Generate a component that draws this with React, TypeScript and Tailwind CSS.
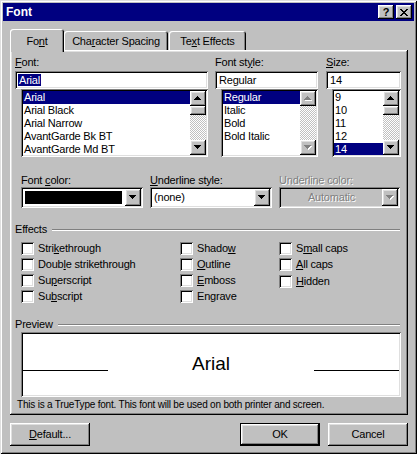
import React from "react";

const RAISED =
  "shadow-[inset_-1px_-1px_#000000,inset_1px_1px_#ffffff,inset_-2px_-2px_#808080,inset_2px_2px_#dfdfdf]";
const SUNKEN =
  "shadow-[inset_1px_1px_#808080,inset_-1px_-1px_#ffffff,inset_2px_2px_#000000,inset_-2px_-2px_#dfdfdf]";

function Mn({ text, i }: { text: string; i: number }) {
  if (i < 0) return <>{text}</>;
  return (
    <>
      {text.slice(0, i)}
      <span className="underline decoration-1 underline-offset-[1px]">{text[i]}</span>
      {text.slice(i + 1)}
    </>
  );
}

function Arrow({ dir, disabled }: { dir: "up" | "down"; disabled?: boolean }) {
  const up = "M3 0h1v1H3zM2 1h3v1H2zM1 2h5v1H1zM0 3h7v1H0z";
  const down = "M0 0h7v1H0zM1 1h5v1H1zM2 2h3v1H2zM3 3h1v1H3z";
  const d = dir === "up" ? up : down;
  return (
    <svg width="8" height="5" viewBox="0 0 8 5" shapeRendering="crispEdges">
      {disabled && <path d={d} fill="#ffffff" transform="translate(1,1)" />}
      <path d={d} fill={disabled ? "#808080" : "#000000"} />
    </svg>
  );
}

function ScrollBar({ thumb, disabled }: { thumb?: boolean; disabled?: boolean }) {
  return (
    <div className="flex w-[16px] flex-col">
      <div className={`flex h-[15px] items-center justify-center bg-[#c0c0c0] ${RAISED}`}>
        <Arrow dir="up" disabled={disabled} />
      </div>
      {thumb && <div className={`h-[9px] bg-[#c0c0c0] ${RAISED}`} />}
      <div className="flex-1 bg-[repeating-conic-gradient(#c0c0c0_0%_25%,#ffffff_0%_50%)] bg-[length:2px_2px]" />
      <div className={`flex h-[15px] items-center justify-center bg-[#c0c0c0] ${RAISED}`}>
        <Arrow dir="down" disabled={disabled} />
      </div>
    </div>
  );
}

function ListBox({
  items,
  selected,
  className,
  thumb,
  disabled,
}: {
  items: string[];
  selected: string;
  className: string;
  thumb?: boolean;
  disabled?: boolean;
}) {
  return (
    <div className={`flex h-[68px] bg-white p-[2px] ${SUNKEN} ${className}`}>
      <div className="flex-1 overflow-hidden">
        {items.map((it) => (
          <div
            key={it}
            className={`h-[13px] whitespace-nowrap pl-[1px] leading-[13px] ${
              it === selected ? "bg-[#000080] text-white" : "text-black"
            }`}
          >
            {it}
          </div>
        ))}
      </div>
      <ScrollBar thumb={thumb} disabled={disabled} />
    </div>
  );
}

function TextField({ children }: { children: React.ReactNode }) {
  return (
    <div className={`h-[18px] bg-white pl-[3px] pt-[3px] leading-[13px] whitespace-nowrap ${SUNKEN}`}>
      {children}
    </div>
  );
}

function Label({ children }: { children: React.ReactNode }) {
  return <div className="h-[15px] leading-[13px] whitespace-nowrap text-black">{children}</div>;
}

function Combo({
  children,
  disabled,
  className,
}: {
  children: React.ReactNode;
  disabled?: boolean;
  className: string;
}) {
  return (
    <div className={`flex h-[21px] p-[2px] ${SUNKEN} ${disabled ? "bg-[#c0c0c0]" : "bg-white"} ${className}`}>
      <div className="flex flex-1">{children}</div>
      <div className={`flex w-[16px] items-center justify-center bg-[#c0c0c0] ${RAISED}`}>
        <Arrow dir="down" disabled={disabled} />
      </div>
    </div>
  );
}

function Check({ text, i }: { text: string; i: number }) {
  return (
    <div className="flex h-[16px] items-center gap-[4px] whitespace-nowrap">
      <div className={`h-[13px] w-[13px] bg-white ${SUNKEN}`} />
      <span className="leading-[13px]">
        <Mn text={text} i={i} />
      </span>
    </div>
  );
}

function GroupTitle({ title }: { title: string }) {
  return (
    <div className="flex h-[13px] w-[385px] items-center">
      <span className="leading-[13px]">{title}</span>
      <div className="ml-[5px] h-[2px] flex-1 border-t border-b border-t-[#808080] border-b-white" />
    </div>
  );
}

function PushButton({
  children,
  isDefault,
  className,
}: {
  children: React.ReactNode;
  isDefault?: boolean;
  className?: string;
}) {
  if (isDefault) {
    return (
      <div className={`h-[23px] w-[80px] border border-black ${className ?? ""}`}>
        <div className={`flex h-full w-full items-center justify-center bg-[#c0c0c0] ${RAISED}`}>
          {children}
        </div>
      </div>
    );
  }
  return (
    <div
      className={`flex h-[23px] w-[80px] items-center justify-center bg-[#c0c0c0] ${RAISED} ${className ?? ""}`}
    >
      {children}
    </div>
  );
}

export default function App() {
  return (
    <div
      className="flex h-[454px] w-[417px] flex-col bg-[#c0c0c0] p-[3px] font-['Liberation_Sans',Arial,sans-serif] text-[11px] tracking-[-0.2px] text-black shadow-[inset_1px_1px_#dfdfdf,inset_-1px_-1px_#000000,inset_2px_2px_#ffffff,inset_-2px_-2px_#808080]"
    >
      {/* Title bar */}
      <div className="flex h-[18px] items-center justify-between bg-[#000080] pl-[3px] pr-[2px]">
        <span className="text-[12px] font-bold leading-[14px] tracking-normal text-white">Font</span>
        <div className="flex gap-[2px]">
          <div
            className={`flex h-[14px] w-[16px] items-center justify-center bg-[#c0c0c0] text-[11px] font-bold leading-[11px] ${RAISED}`}
          >
            ?
          </div>
          <div className={`flex h-[14px] w-[16px] items-center justify-center bg-[#c0c0c0] ${RAISED}`}>
            <svg width="8" height="7" viewBox="0 0 8 7" shapeRendering="crispEdges">
              <path
                d="M0 0h2v1H0zM6 0h2v1H6zM1 1h2v1H1zM5 1h2v1H5zM2 2h4v1H2zM3 3h2v1H3zM2 4h4v1H2zM1 5h2v1H1zM5 5h2v1H5zM0 6h2v1H0zM6 6h2v1H6z"
                fill="#000000"
              />
            </svg>
          </div>
        </div>
      </div>

      {/* Body */}
      <div className="flex flex-col pl-[7px] pr-[6px] pt-[8px]">
        {/* Tabs */}
        <div className="flex h-[21px] items-end">
          <div className="relative z-10 -mb-[2px] flex h-[23px] w-[54px] justify-center rounded-t-[3px] bg-[#c0c0c0] pt-[6px] leading-[13px] shadow-[inset_1px_1px_#ffffff,inset_-1px_0_#000000,inset_-2px_0_#808080]">
            <span>
              <Mn text="Font" i={2} />
            </span>
          </div>
          <div className="flex h-[19px] w-[104px] justify-center rounded-t-[3px] bg-[#c0c0c0] pt-[4px] leading-[13px] shadow-[inset_1px_1px_#ffffff,inset_-1px_0_#000000,inset_-2px_0_#808080]">
            <span className="whitespace-nowrap">
              <Mn text="Character Spacing" i={3} />
            </span>
          </div>
          <div className="ml-[1px] flex h-[19px] w-[77px] justify-center rounded-t-[3px] bg-[#c0c0c0] pt-[4px] leading-[13px] shadow-[inset_1px_1px_#ffffff,inset_-1px_0_#000000,inset_-2px_0_#808080]">
            <span className="whitespace-nowrap">
              <Mn text="Text Effects" i={2} />
            </span>
          </div>
        </div>

        {/* Panel */}
        <div className={`flex h-[365px] flex-col bg-[#c0c0c0] pl-[5px] pt-[6px] ${RAISED}`}>
          {/* Row 1: font lists */}
          <div className="flex">
            <div className="flex w-[193px] flex-col">
              <Label>
                <Mn text="Font:" i={0} />
              </Label>
              <TextField>
                <span className="bg-[#000080] px-[1px] text-white">Arial</span>
              </TextField>
              <ListBox
                className="ml-[6px] w-[187px]"
                items={["Arial", "Arial Black", "Arial Narrow", "AvantGarde Bk BT", "AvantGarde Md BT"]}
                selected="Arial"
                thumb
              />
            </div>
            <div className="ml-[7px] flex w-[103px] flex-col">
              <Label>
                <Mn text="Font style:" i={7} />
              </Label>
              <TextField>
                <span className="pl-[1px]">Regular</span>
              </TextField>
              <ListBox
                className="ml-[6px] w-[97px]"
                items={["Regular", "Italic", "Bold", "Bold Italic"]}
                selected="Regular"
                disabled
              />
            </div>
            <div className="ml-[8px] flex w-[75px] flex-col">
              <Label>
                <Mn text="Size:" i={0} />
              </Label>
              <TextField>
                <span className="pl-[1px]">14</span>
              </TextField>
              <ListBox
                className="ml-[6px] w-[69px]"
                items={["9", "10", "11", "12", "14"]}
                selected="14"
                thumb
              />
            </div>
          </div>

          {/* Row 2: colors */}
          <div className="ml-[6px] mt-[17px] flex gap-[7px]">
            <div className="flex w-[122px] flex-col">
              <div className="h-[13px] leading-[13px]">
                <Mn text="Font color:" i={5} />
              </div>
              <Combo className="w-[122px]">
                <div className="flex flex-1 p-[2px] pr-[3px]">
                  <div className="flex-1 bg-black" />
                </div>
              </Combo>
            </div>
            <div className="flex w-[122px] flex-col">
              <div className="h-[13px] leading-[13px]">
                <Mn text="Underline style:" i={0} />
              </div>
              <Combo className="w-[122px]">
                <span className="pl-[2px] pt-[2px] leading-[13px]">(none)</span>
              </Combo>
            </div>
            <div className="flex w-[121px] flex-col">
              <div className="h-[13px] leading-[13px] text-[#808080] [text-shadow:1px_1px_#ffffff]">
                Underline color:
              </div>
              <Combo className="w-[121px]" disabled>
                <span className="flex-1 pt-[2px] text-center leading-[13px] text-[#808080] [text-shadow:1px_1px_#ffffff]">
                  Automatic
                </span>
              </Combo>
            </div>
          </div>

          {/* Effects */}
          <div className="mt-[15px]">
            <GroupTitle title="Effects" />
          </div>
          <div className="ml-[6px] mt-[4px] flex">
            <div className="flex w-[159px] flex-col">
              <Check text="Strikethrough" i={4} />
              <Check text="Double strikethrough" i={4} />
              <Check text="Superscript" i={2} />
              <Check text="Subscript" i={2} />
            </div>
            <div className="flex w-[99px] flex-col">
              <Check text="Shadow" i={5} />
              <Check text="Outline" i={0} />
              <Check text="Emboss" i={0} />
              <Check text="Engrave" i={2} />
            </div>
            <div className="flex flex-col">
              <Check text="Small caps" i={1} />
              <Check text="All caps" i={0} />
              <div className="mt-[1px]">
                <Check text="Hidden" i={0} />
              </div>
            </div>
          </div>

          {/* Preview */}
          <div className="mt-[14px]">
            <GroupTitle title="Preview" />
          </div>
          <div className={`ml-[6px] mt-[1px] flex h-[65px] w-[380px] items-start bg-white p-[2px] pt-[22px] ${SUNKEN}`}>
            <div className="mt-[16px] h-[1px] w-[85px] bg-black" />
            <div className="flex-1 text-center text-[19px] leading-[20px] tracking-normal">Arial</div>
            <div className="mt-[16px] h-[1px] w-[85px] bg-black" />
          </div>
          <div className="ml-[2px] h-[13px] pt-[1px] text-[10px] leading-[13px] whitespace-nowrap tracking-[-0.2px]">
            This is a TrueType font. This font will be used on both printer and screen.
          </div>
        </div>

        {/* Buttons */}
        <div className="mt-[8px] flex">
          <PushButton>
            <span>
              <Mn text="Default..." i={0} />
            </span>
          </PushButton>
          <div className="flex-1" />
          <PushButton isDefault>OK</PushButton>
          <PushButton className="ml-[8px]">Cancel</PushButton>
        </div>
      </div>
    </div>
  );
}
